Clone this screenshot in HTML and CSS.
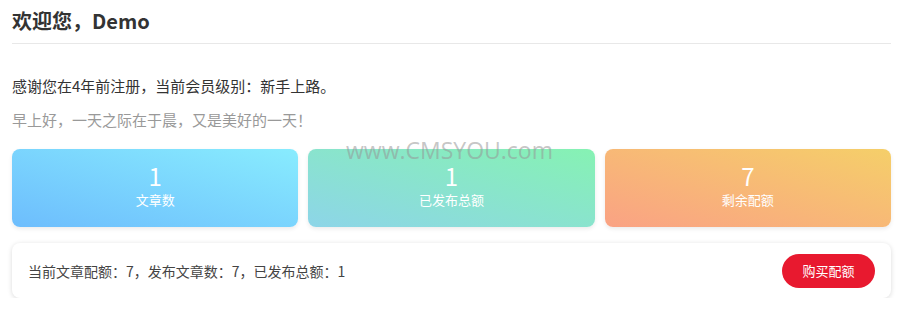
FILE: index.html
```html
<!DOCTYPE html>
<html lang="zh">
<head>
<meta charset="utf-8">
<link rel="stylesheet" href="styles.css">
</head>
<body>
<div class="page">
  <h1 class="title">欢迎您，Demo</h1>
  <p class="intro">感谢您在4年前注册，当前会员级别：新手上路。</p>
  <p class="greet">早上好，一天之际在于晨，又是美好的一天！</p>
  <div class="stats">
    <div class="watermark">www.CMSYOU.com</div>
    <div class="stat blue"><div class="num">1</div><div class="label">文章数</div></div>
    <div class="stat green"><div class="num">1</div><div class="label">已发布总额</div></div>
    <div class="stat orange"><div class="num">7</div><div class="label">剩余配额</div></div>
  </div>
  <div class="quota">
    <span class="quota-text">当前文章配额：7，发布文章数：7，已发布总额：1</span>
    <button class="buy">购买配额</button>
  </div>
</div>
</body>
</html>
```
FILE: styles.css
```css
* { box-sizing: border-box; }
html, body { margin: 0; padding: 0; background: #fff; }
body {
  font-family: "Microsoft YaHei", "Noto Sans CJK SC", "Noto Sans", sans-serif;
  color: #333;
  text-spacing-trim: space-all;
}
.page { padding: 0 10px 0 12px; }
.title {
  margin: 0;
  font-size: 20px;
  font-weight: bold;
  line-height: 42px;
  height: 44px;
  color: #333;
  border-bottom: 1px solid #e8e8e8;
}
.intro { margin: 31px 0 0; font-size: 15px; line-height: 22px; color: #333; }
.greet { margin: 12px 0 0; font-size: 15px; line-height: 22px; color: #999; }
.stats {
  position: relative;
  display: grid;
  grid-template-columns: 1fr 1fr 1fr;
  gap: 10px;
  margin-top: 18px;
}
.watermark {
  position: absolute;
  left: 334px;
  top: -15px;
  font-family: "Open Sans", "Noto Sans", sans-serif;
  font-size: 23px;
  color: rgba(150,150,150,0.55);
  z-index: 2;
}
.stat {
  height: 78px;
  border-radius: 8px;
  color: #fff;
  text-align: center;
  padding-top: 13px;
  box-shadow: 0 2px 4px rgba(0,0,0,0.08);
}
.stat .num { font-size: 24px; line-height: 28px; }
.stat .label { font-size: 13px; line-height: 20px; margin-top: 0; }
.blue { background: linear-gradient(to top right, #6dbdfd, #88ecfe); }
.green { background: linear-gradient(to top right, #8dd5e8, #86f2b3); }
.orange { background: linear-gradient(to top right, #faa284, #f5cf69); }
.quota {
  margin-top: 16px;
  height: 55px;
  border-radius: 8px;
  box-shadow: 0 1px 5px rgba(0,0,0,0.15);
  display: flex;
  align-items: center;
  justify-content: space-between;
  padding: 0 16px;
}
.quota-text { font-size: 14px; color: #444; }
.buy {
  border: none;
  background: #e8192f;
  color: #fff;
  font-family: inherit;
  font-size: 13px;
  width: 93px;
  height: 34px;
  border-radius: 17px;
  padding: 0;
}
```
